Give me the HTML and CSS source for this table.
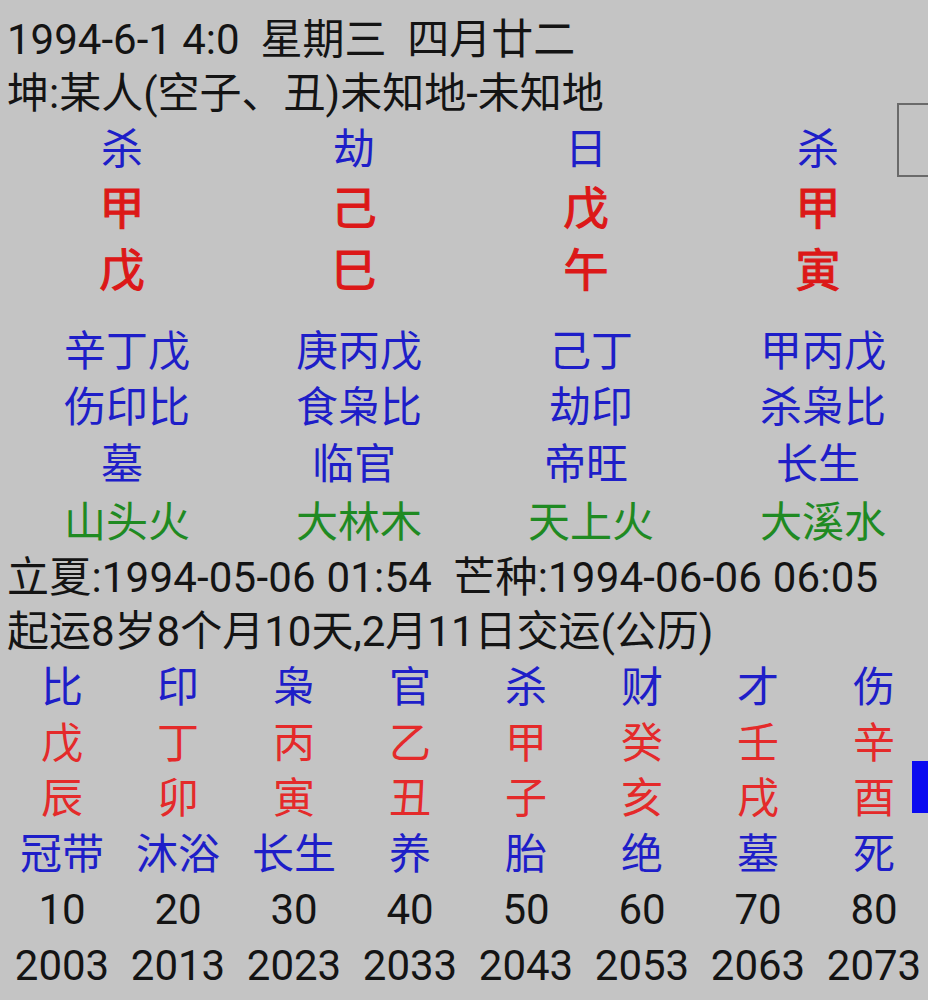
FILE: index.html
```html
<!DOCTYPE html>
<html lang="zh-CN">
<head>
<meta charset="utf-8">
<title>八字排盘</title>
<link rel="stylesheet" href="styles.css">
</head>
<body>
<div class="page">
  <div class="line">1994-6-1 4:0  星期三  四月廿二</div>
  <div class="line">坤:某人(空子、丑)未知地-未知地</div>

  <div class="pillars">
    <div class="row r-label blue"><span>杀</span><span>劫</span><span>日</span><span>杀</span></div>
    <div class="row r-stem red"><span>甲</span><span>己</span><span>戊</span><span>甲</span></div>
    <div class="row r-stem red"><span>戊</span><span>巳</span><span>午</span><span>寅</span></div>
    <div class="row r-hidden blue shift"><span>辛丁戊</span><span>庚丙戊</span><span>己丁</span><span>甲丙戊</span></div>
    <div class="row r-std blue shift"><span>伤印比</span><span>食枭比</span><span>劫印</span><span>杀枭比</span></div>
    <div class="row r-tall blue"><span>墓</span><span>临官</span><span>帝旺</span><span>长生</span></div>
    <div class="row r-tall green shift"><span>山头火</span><span>大林木</span><span>天上火</span><span>大溪水</span></div>
  </div>

  <div class="line l-term">立夏:1994-05-06 01:54  芒种:1994-06-06 06:05</div>
  <div class="line l-start">起运8岁8个月10天,2月11日交运(公历)</div>

  <div class="dayun">
    <div class="drow blue"><span>比</span><span>印</span><span>枭</span><span>官</span><span>杀</span><span>财</span><span>才</span><span>伤</span></div>
    <div class="drow red2"><span>戊</span><span>丁</span><span>丙</span><span>乙</span><span>甲</span><span>癸</span><span>壬</span><span>辛</span></div>
    <div class="drow red2"><span>辰</span><span>卯</span><span>寅</span><span>丑</span><span>子</span><span>亥</span><span>戌</span><span>酉</span></div>
    <div class="drow blue"><span>冠带</span><span>沐浴</span><span>长生</span><span>养</span><span>胎</span><span>绝</span><span>墓</span><span>死</span></div>
    <div class="drow black"><span>10</span><span>20</span><span>30</span><span>40</span><span>50</span><span>60</span><span>70</span><span>80</span></div>
    <div class="drow black"><span>2003</span><span>2013</span><span>2023</span><span>2033</span><span>2043</span><span>2053</span><span>2063</span><span>2073</span></div>
  </div>

  <div class="thumb"></div>
  <div class="marker"></div>
</div>
</body>
</html>
```

FILE: styles.css
```css
html, body {
  margin: 0;
  padding: 0;
  background: #c4c4c4;
}

.page {
  position: relative;
  width: 928px;
  height: 1000px;
  overflow: hidden;
  padding-top: 13px;
  box-sizing: border-box;
  font-family: Roboto, "Noto Sans CJK SC", sans-serif;
  font-size: 42px;
  color: #141414;
}

.line {
  height: 54px;
  line-height: 54px;
  padding-left: 7px;
  white-space: pre;
}

.pillars {
  display: flex;
  flex-direction: column;
  margin-left: 6px;
}

.row {
  display: grid;
  grid-template-columns: repeat(4, 232px);
  text-align: center;
  white-space: nowrap;
}

.shift { padding-left: 5px; }

.r-label { height: 58px; line-height: 58px; }
.r-stem {
  height: 62px;
  line-height: 62px;
  font-size: 45px;
  -webkit-text-stroke: 1.2px #dc1818;
}
.r-stem:nth-child(3) { margin-bottom: 21px; }
.r-hidden { height: 56px; line-height: 56px; }
.r-std { height: 56px; line-height: 56px; }
.r-tall { height: 58px; line-height: 58px; }

.l-term { height: 52px; line-height: 52px; letter-spacing: 0.2px; }
.l-start { height: 56px; line-height: 56px; }

.dayun {
  display: flex;
  flex-direction: column;
  margin-left: 4px;
}

.drow {
  display: grid;
  grid-template-columns: repeat(8, 116px);
  text-align: center;
  height: 55.6px;
  line-height: 55.6px;
  white-space: nowrap;
}

.blue { color: #1e1ec8; }
.red { color: #dc1818; }
.red2 { color: #e42a2a; }
.green { color: #1f8a22; }
.black { color: #141414; }

.thumb {
  position: absolute;
  top: 103px;
  right: -2px;
  width: 29px;
  height: 70px;
  border: 2px solid #6a6a6a;
}

.marker {
  position: absolute;
  top: 761px;
  right: 0;
  width: 16px;
  height: 52px;
  background: #0a0af0;
}
```
